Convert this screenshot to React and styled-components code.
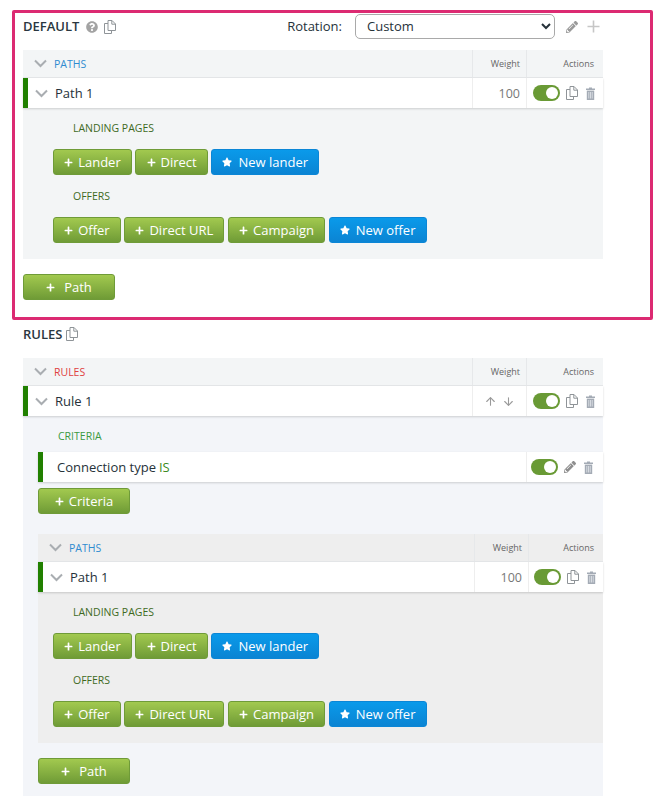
import React from "react";
import styled, { createGlobalStyle } from "styled-components";
import { FaPlus, FaStar, FaQuestionCircle, FaPencilAlt } from "react-icons/fa";
import { FiArrowUp, FiArrowDown } from "react-icons/fi";

const GlobalStyle = createGlobalStyle`
    html, body {
        margin: 0;
        padding: 0;
        background: #fff;
        font-family: "Open Sans", "Liberation Sans", sans-serif;
        color: #26323a;
        font-size: 13px;
    }
`

const Page = styled.div`
    width: 662px;
    padding-top: 10px;
`

const DefaultBox = styled.section`
    box-sizing: border-box;
    width: 641px;
    height: 310px;
    margin-left: 12px;
    border: 3px solid #dc2a72;
    border-radius: 2px;
    padding: 1px 47px 0 8px;
`

const TopBar = styled.div`
    display: flex;
    align-items: center;
    height: 25px;
    margin-bottom: 11px;
`

const Title = styled.h2`
    margin: 0;
    font-size: 13px;
    font-weight: 600;
    line-height: 16px;
    color: #2a3740;
`

const TopTitle = styled(Title)`
    padding-bottom: 2px;
`

const TitleIcons = styled.span`
    display: inline-flex;
    align-items: center;
    gap: 6px;
    margin-left: 7px;
    color: #a3a3a3;
    flex: 1;
`

const RotationLabel = styled.label`
    font-size: 13px;
    margin-right: 13px;
    padding-bottom: 2px;
`

const Select = styled.select`
    box-sizing: border-box;
    width: 200px;
    height: 25px;
    padding: 0 0 2px 7px;
    border: 1px solid #a9a9a9;
    border-radius: 5px;
    background: #fff;
    font-family: inherit;
    font-size: 13px;
    color: #26323a;
`

const TopIcons = styled.span`
    display: flex;
    align-items: center;
    gap: 9px;
    margin-left: 11px;
    margin-right: 3px;
    color: #9a9a9a;
`

const Panel = styled.div`
    background: ${p => (p.$nested ? "#eeeeee" : "#f3f5f6")};
`

const PanelHead = styled.div`
    display: flex;
    align-items: center;
    height: 27px;
    border-bottom: 1px solid #e6e8ea;
    font-size: 9px;
    color: #666;
`

const HeadName = styled.div`
    flex: 1;
    display: flex;
    align-items: center;
    gap: 7px;
    padding-left: 11px;
    font-size: 10.5px;
    color: ${p => p.$color};
`

const HeadCell = styled.div`
    box-sizing: border-box;
    width: ${p => p.$width}px;
    height: 100%;
    line-height: 27px;
    text-align: right;
    padding-right: ${p => p.$pad}px;
    border-left: 1px solid #e6e8ea;
`

const Row = styled.div`
    display: flex;
    align-items: center;
    height: 30px;
    background: #fff;
    border-left: 5px solid #218000;
    box-shadow: 0 1px 2px rgba(0, 0, 0, 0.16);
    position: relative;
`

const RowName = styled.div`
    flex: 1;
    display: flex;
    align-items: center;
    gap: 7px;
    padding-left: ${p => p.$pad || 7}px;
    font-size: 13px;
`

const WeightCell = styled.div`
    box-sizing: border-box;
    display: flex;
    align-items: center;
    justify-content: flex-end;
    gap: 5px;
    width: ${p => p.$width}px;
    height: 100%;
    padding-right: ${p => p.$pad || 6}px;
    border-left: 1px solid #eeeeee;
    color: #777;
    font-size: 12.5px;
`

const ActionCell = styled.div`
    box-sizing: border-box;
    display: flex;
    align-items: center;
    gap: 6px;
    width: ${p => p.$width}px;
    height: 100%;
    padding-left: ${p => p.$pad}px;
    border-left: 1px solid #eeeeee;
`

const Toggle = styled.span`
    display: block;
    width: 27px;
    height: 16px;
    border-radius: 8px;
    background: #699a35;
    position: relative;

    &::after {
        content: "";
        position: absolute;
        top: 2px;
        right: 2px;
        width: 12px;
        height: 12px;
        border-radius: 50%;
        background: #fff;
    }
`

const PanelBody = styled.div`
    padding: 0 0 16px ${p => p.$indent}px;
`

const GroupLabel = styled.div`
    margin: 13px 0 13px 20px;
    font-size: 10.5px;
    line-height: 16px;
    color: ${p => p.$color || "#3f6a1e"};

    &:first-child {
        margin-top: 12px;
    }
`

const ButtonRow = styled.div`
    display: flex;
    gap: 3.4px;
`

const Button = styled.button`
    box-sizing: border-box;
    display: inline-flex;
    align-items: center;
    justify-content: center;
    gap: ${p => (p.$spread ? 9 : p.$blue ? 6 : 5)}px;
    height: 26px;
    min-width: ${p => (p.$block ? 92 : 0)}px;
    padding: 0 10.2px;
    border: 1px solid ${p => (p.$blue ? "#0b86d6" : "#6f9b38")};
    border-radius: 3px;
    background: ${p => (p.$blue
        ? "linear-gradient(#0a9aea, #0b84d3)"
        : "linear-gradient(#a2c94f, #6f9b36)")};
    color: #fff;
    font-family: inherit;
    font-size: 13px;
    line-height: 1;
`

const PathFooter = styled.div`
    margin-top: 15px;
`

const RulesTitle = styled(Title)`
    display: flex;
    align-items: center;
    gap: 4px;
    margin: 6px 0 16px 23px;
`

const RulesWrap = styled.div`
    width: 580px;
    margin-left: 23px;
`

const RuleBody = styled.div`
    display: flow-root;
    background: #f3f5f9;
    padding: 0 0 12px 15px;
`

const CriteriaButton = styled.div`
    margin-top: 6px;
    margin-bottom: 20px;
`

const CriteriaLabel = styled(GroupLabel)`
    margin-bottom: 8px;
`

const IsWord = styled.span`
    color: #3a8a22;
    margin-left: 3px;
`

const TrashSlot = styled.span`
    display: flex;
    margin-left: 2px;
`

const Chevron = ({ color = "#a9adb1" }) => (
    <svg width="13" height="9" viewBox="0 0 13 9">
        <path d="M1 1.5 L6.5 7 L12 1.5" fill="none" stroke={color} strokeWidth="2" />
    </svg>
)

const CopyIcon = () => (
    <svg width="12" height="14" viewBox="0 0 12 14" fill="none" stroke="#8f9498" strokeWidth="1">
        <path d="M4 3.5 H0.5 V13.5 H7.5 V10.5" fill="#fff" />
        <path d="M4 0.5 H8 L11.5 4 V10.5 H4 Z" fill="#fff" />
        <path d="M7.8 0.5 V4.2 H11.5" />
    </svg>
)

const PlusThin = () => (
    <svg width="13" height="13" viewBox="0 0 13 13">
        <path d="M6.5 0.5 V12.5 M0.5 6.5 H12.5" stroke="#c6c6c6" strokeWidth="1.6" />
    </svg>
)

const Trash = () => (
    <TrashSlot>
        <svg width="9" height="13" viewBox="0 0 9 13">
            <path d="M3 0.5 H6 V1.5 H9 V3 H0 V1.5 H3 Z" fill="#a4abb5" />
            <path d="M0.8 3.6 H8.2 V13 H0.8 Z" fill="#a4abb5" />
            <path d="M2.8 5 V11.5 M4.5 5 V11.5 M6.2 5 V11.5" stroke="#e4e7ec" strokeWidth="0.8" />
        </svg>
    </TrashSlot>
)

const Actions = ({ width, pad, edit }) => (
    <ActionCell $width={width} $pad={pad}>
        <Toggle />
        {edit ? <FaPencilAlt size={12} color="#8e8e8e" /> : <CopyIcon />}
        <Trash />
    </ActionCell>
)

const Add = ({ label, spread, block }) => (
    <Button $spread={spread} $block={block}><FaPlus size={9} />{label}</Button>
)

const New = ({ label }) => (
    <Button $blue><FaStar size={10} />{label}</Button>
)

const PathPanel = ({ nested }) => (
    <Panel $nested={nested}>
        <PanelHead>
            <HeadName $color="#2f8bd0"><Chevron />PATHS</HeadName>
            <HeadCell $width={54} $pad={6}>Weight</HeadCell>
            <HeadCell $width={nested ? 75 : 77} $pad={9}>Actions</HeadCell>
        </PanelHead>
        <Row>
            <RowName><Chevron />Path 1</RowName>
            <WeightCell $width={54}>100</WeightCell>
            <Actions width={nested ? 75 : 77} pad={nested ? 5 : 6} />
        </Row>
        <PanelBody $indent={nested ? 15 : 30}>
            <GroupLabel>LANDING PAGES</GroupLabel>
            <ButtonRow>
                <Add label="Lander" />
                <Add label="Direct" />
                <New label="New lander" />
            </ButtonRow>
            <GroupLabel>OFFERS</GroupLabel>
            <ButtonRow>
                <Add label="Offer" />
                <Add label="Direct URL" />
                <Add label="Campaign" />
                <New label="New offer" />
            </ButtonRow>
        </PanelBody>
    </Panel>
)

const App = () => (
    <Page>
        <GlobalStyle />
        <DefaultBox>
            <TopBar>
                <TopTitle>DEFAULT</TopTitle>
                <TitleIcons>
                    <FaQuestionCircle size={12} />
                    <CopyIcon />
                </TitleIcons>
                <RotationLabel>Rotation:</RotationLabel>
                <Select defaultValue="custom">
                    <option value="custom">Custom</option>
                </Select>
                <TopIcons>
                    <FaPencilAlt size={12} />
                    <PlusThin />
                </TopIcons>
            </TopBar>
            <PathPanel />
            <PathFooter>
                <Add label="Path" spread block />
            </PathFooter>
        </DefaultBox>

        <RulesTitle>RULES <CopyIcon /></RulesTitle>
        <RulesWrap>
            <Panel>
                <PanelHead>
                    <HeadName $color="#e0403f"><Chevron />RULES</HeadName>
                    <HeadCell $width={54} $pad={6}>Weight</HeadCell>
                    <HeadCell $width={77} $pad={9}>Actions</HeadCell>
                </PanelHead>
                <Row>
                    <RowName><Chevron />Rule 1</RowName>
                    <WeightCell $width={54} $pad={11}>
                        <FiArrowUp size={13} color="#9a9a9a" />
                        <FiArrowDown size={13} color="#9a9a9a" />
                    </WeightCell>
                    <Actions width={77} pad={6} />
                </Row>
            </Panel>
            <RuleBody>
                <CriteriaLabel $color="#3a9a3f">CRITERIA</CriteriaLabel>
                <Row>
                    <RowName $pad={14}><span>Connection type<IsWord>IS</IsWord></span></RowName>
                    <Actions width={77} pad={4} edit />
                </Row>
                <CriteriaButton>
                    <Add label="Criteria" block />
                </CriteriaButton>
                <PathPanel nested />
                <PathFooter>
                    <Add label="Path" spread block />
                </PathFooter>
            </RuleBody>
        </RulesWrap>
    </Page>
)

export default App
